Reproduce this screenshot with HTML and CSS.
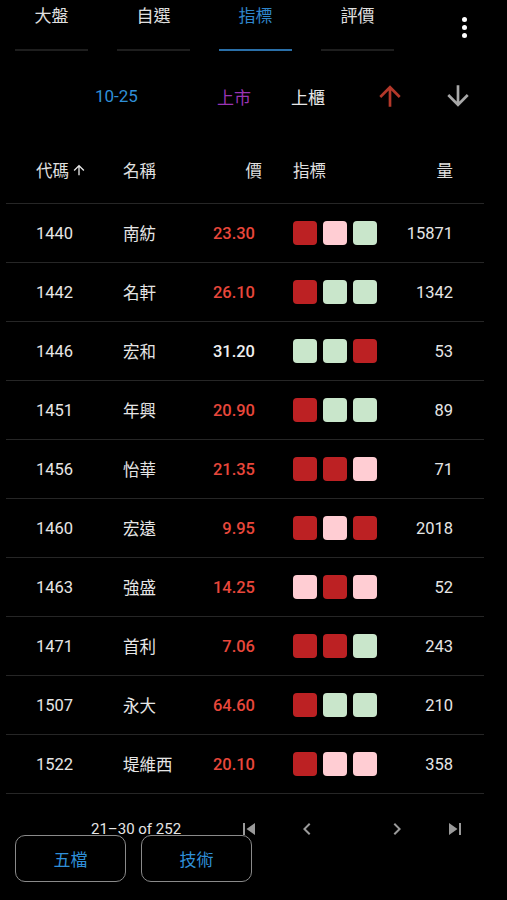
FILE: index.html
```html
<!DOCTYPE html>
<html lang="zh-Hant">
<head>
  <meta charset="UTF-8">
  <meta name="viewport" content="width=device-width, initial-scale=1.0">
  <title>指標</title>
  <link rel="stylesheet" href="styles.css">
</head>
<body>
  <div class="tabs">
    <div class="tab">大盤</div>
    <div class="tab">自選</div>
    <div class="tab active">指標</div>
    <div class="tab">評價</div>
    <div class="menu"><span></span><span></span><span></span></div>
  </div>

  <div class="filters">
    <span class="date">10-25</span>
    <span class="market twse">上市</span>
    <span class="market">上櫃</span>
    <svg class="sort up" viewBox="0 0 24 24"><path d="M4 12l1.41 1.41L11 7.83V20h2V7.83l5.58 5.59L20 12l-8-8-8 8z"/></svg>
    <svg class="sort down" viewBox="0 0 24 24"><path d="M20 12l-1.41-1.41L13 16.17V4h-2v12.17l-5.58-5.59L4 12l8 8 8-8z"/></svg>
  </div>

  <div class="table">
    <div class="row head">
      <div class="code">代碼 <svg class="head-arrow" viewBox="0 0 24 24"><path d="M4 12l1.41 1.41L11 7.83V20h2V7.83l5.58 5.59L20 12l-8-8-8 8z"/></svg></div>
      <div class="name">名稱</div>
      <div class="price">價</div>
      <div class="ind">指標</div>
      <div class="vol">量</div>
    </div>

    <div class="row">
      <div class="code">1440</div><div class="name">南紡</div><div class="price red">23.30</div>
      <div class="ind"><i class="r"></i><i class="p"></i><i class="g"></i></div><div class="vol">15871</div>
    </div>
    <div class="row">
      <div class="code">1442</div><div class="name">名軒</div><div class="price red">26.10</div>
      <div class="ind"><i class="r"></i><i class="g"></i><i class="g"></i></div><div class="vol">1342</div>
    </div>
    <div class="row">
      <div class="code">1446</div><div class="name">宏和</div><div class="price">31.20</div>
      <div class="ind"><i class="g"></i><i class="g"></i><i class="r"></i></div><div class="vol">53</div>
    </div>
    <div class="row">
      <div class="code">1451</div><div class="name">年興</div><div class="price red">20.90</div>
      <div class="ind"><i class="r"></i><i class="g"></i><i class="g"></i></div><div class="vol">89</div>
    </div>
    <div class="row">
      <div class="code">1456</div><div class="name">怡華</div><div class="price red">21.35</div>
      <div class="ind"><i class="r"></i><i class="r"></i><i class="p"></i></div><div class="vol">71</div>
    </div>
    <div class="row">
      <div class="code">1460</div><div class="name">宏遠</div><div class="price red">9.95</div>
      <div class="ind"><i class="r"></i><i class="p"></i><i class="r"></i></div><div class="vol">2018</div>
    </div>
    <div class="row">
      <div class="code">1463</div><div class="name">強盛</div><div class="price red">14.25</div>
      <div class="ind"><i class="p"></i><i class="r"></i><i class="p"></i></div><div class="vol">52</div>
    </div>
    <div class="row">
      <div class="code">1471</div><div class="name">首利</div><div class="price red">7.06</div>
      <div class="ind"><i class="r"></i><i class="r"></i><i class="g"></i></div><div class="vol">243</div>
    </div>
    <div class="row">
      <div class="code">1507</div><div class="name">永大</div><div class="price red">64.60</div>
      <div class="ind"><i class="r"></i><i class="g"></i><i class="g"></i></div><div class="vol">210</div>
    </div>
    <div class="row">
      <div class="code">1522</div><div class="name">堤維西</div><div class="price red">20.10</div>
      <div class="ind"><i class="r"></i><i class="p"></i><i class="p"></i></div><div class="vol">358</div>
    </div>
  </div>

  <div class="pager">
    <span class="range">21–30 of 252</span>
    <svg class="pg first" viewBox="0 0 24 24"><path d="M6 6h2v12H6zm3.5 6l8.5 6V6z"/></svg>
    <svg class="pg prev" viewBox="0 0 24 24"><path d="M15.41 7.41L14 6l-6 6 6 6 1.41-1.41L10.83 12z"/></svg>
    <svg class="pg next" viewBox="0 0 24 24"><path d="M10 6L8.59 7.41 13.17 12l-4.58 4.59L10 18l6-6z"/></svg>
    <svg class="pg last" viewBox="0 0 24 24"><path d="M6 18l8.5-6L6 6v12zM16 6v12h2V6h-2z"/></svg>
  </div>

  <div class="actions">
    <button>五檔</button>
    <button>技術</button>
  </div>
</body>
</html>
```

FILE: styles.css
```css
/* dark market screen */
body {
  margin: 0;
  background: #000;
  color: #e6e6e6;
  font-family: Roboto, "Noto Sans CJK TC", sans-serif;
  width: 507px;
  height: 900px;
  position: relative;
  overflow: hidden;
}

.tabs {
  display: flex;
  gap: 29px;
  padding-left: 15px;
  height: 51px;
}

.tab {
  width: 73px;
  height: 49px;
  border-bottom: 2px solid #1e1e1e;
  text-align: center;
  font-size: 17px;
  line-height: 32px;
  color: #e0e0e0;
}

.tab.active {
  color: #2f86cc;
  border-bottom-color: #2a6fa8;
}

.menu {
  display: flex;
  flex-direction: column;
  gap: 3px;
  margin-left: 39px;
  padding-top: 17px;
}

.menu span {
  width: 5px;
  height: 5px;
  border-radius: 50%;
  background: #fff;
}

.filters {
  display: flex;
  align-items: center;
  height: 82px;
  padding-top: 4px;
  font-size: 17px;
}

.date {
  color: #2f8fd8;
  margin-left: 95px;
  width: 122px;
}

.market {
  color: #e8e8e8;
  width: 74px;
}

.market.twse {
  color: #9a34b4;
}

.sort {
  width: 32px;
  height: 32px;
  flex-shrink: 0;
}

.sort.up {
  fill: #b3382a;
  margin-left: 9px;
}

.sort.down {
  fill: #a8a8a8;
  margin-left: 36px;
}

.table {
  margin: 0 23px 0 6px;
}

.row {
  display: grid;
  grid-template-columns: 87px 70px 69px 115px 76px;
  align-items: center;
  height: 58px;
  padding-left: 30px;
  border-bottom: 1px solid #262626;
  font-size: 16.5px;
}

.row.head {
  height: 66px;
  color: #e0e0e0;
}

.code {
  display: flex;
  align-items: center;
}

.head-arrow {
  width: 16px;
  height: 16px;
  fill: #e8e8e8;
  margin-left: 2px;
}

.price {
  text-align: right;
  font-weight: 500;
  color: #f0f0f0;
  padding-right: 7px;
}

.head .price {
  padding-right: 0;
  font-weight: 400;
  color: #e0e0e0;
}

.price.red {
  color: #e8473b;
}

.ind {
  display: flex;
  gap: 6px;
  padding-left: 31px;
}

.ind i {
  flex-shrink: 0;
  width: 24px;
  height: 24px;
  border-radius: 4px;
}

.ind .r { background: #bc2123; }
.ind .p { background: #ffcdd3; }
.ind .g { background: #c9e6cb; }

.vol {
  text-align: right;
}

.pager {
  display: flex;
  align-items: center;
  height: 70px;
  font-size: 15px;
  color: #e6e6e6;
}

.range {
  margin-left: 91px;
  width: 146px;
}

.pg {
  width: 24px;
  height: 24px;
  fill: #9a9a9a;
}

.pg.prev { margin-left: 34px; }
.pg.next { margin-left: 66px; }
.pg.last { margin-left: 34px; }

.actions {
  position: absolute;
  left: 15px;
  top: 835px;
  display: flex;
  gap: 15px;
}

.actions button {
  width: 111px;
  height: 47px;
  background: #000;
  border: 1.5px solid #8a8a8a;
  border-radius: 10px;
  color: #2f8fd8;
  font-family: "Noto Sans CJK TC", sans-serif;
  font-size: 17px;
}
```
